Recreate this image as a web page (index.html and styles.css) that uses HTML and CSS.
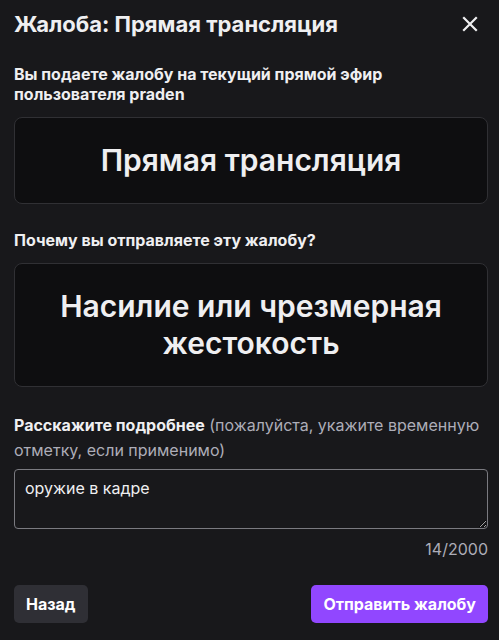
FILE: index.html
```html
<!DOCTYPE html>
<html lang="ru">
<head>
  <meta charset="UTF-8">
  <meta name="viewport" content="width=device-width, initial-scale=1.0">
  <title>Жалоба</title>
  <link rel="stylesheet" href="styles.css">
</head>
<body>
  <div class="modal">
    <div class="header">
      <h1 class="title">Жалоба: Прямая трансляция</h1>
      <button class="close" aria-label="Закрыть">
        <svg width="16" height="16" viewBox="0 0 16 16">
          <path d="M2 2 L14 14 M14 2 L2 14" stroke="#efeff1" stroke-width="2.2" stroke-linecap="square" fill="none"/>
        </svg>
      </button>
    </div>

    <p class="label">Вы подаете жалобу на текущий прямой эфир пользователя praden</p>
    <div class="choice">Прямая трансляция</div>

    <p class="label">Почему вы отправляете эту жалобу?</p>
    <div class="choice">Насилие или чрезмерная жестокость</div>

    <p class="details"><span class="details-strong">Расскажите подробнее</span> (пожалуйста, укажите временную отметку, если применимо)</p>
    <textarea class="input">оружие в кадре</textarea>
    <div class="counter">14/2000</div>

    <div class="actions">
      <button class="btn btn-back">Назад</button>
      <button class="btn btn-submit">Отправить жалобу</button>
    </div>
  </div>
</body>
</html>
```

FILE: styles.css
```css
* {
  box-sizing: border-box;
}
html, body {
  margin: 0;
  background-color: #18181b;
}
body {
  font-family: Inter, "Noto Sans", sans-serif;
  color: #efeff1;
}
.modal {
  padding: 10px 11px 18px 14px;
}
.header {
  display: flex;
  justify-content: space-between;
  align-items: center;
  height: 28px;
}
.title {
  margin: 0;
  font-size: 22px;
  font-weight: 700;
  line-height: 28px;
}
.close {
  background: none;
  border: 0;
  padding: 0;
  margin-right: 10px;
  width: 16px;
  height: 16px;
  display: flex;
}
.label {
  margin: 26px 0 13px;
  font-size: 16px;
  font-weight: 700;
  line-height: 20px;
}
.choice {
  background-color: #0e0e10;
  border: 1px solid #303034;
  border-radius: 8px;
  padding: 24px 40px;
  text-align: center;
  font-size: 30px;
  font-weight: 600;
  line-height: 37px;
}
.details {
  margin: 26px 0 6px;
  font-size: 16px;
  line-height: 25px;
  color: #adadb8;
}
.details-strong {
  color: #efeff1;
  font-weight: 700;
}
.input {
  display: block;
  width: 100%;
  height: 60px;
  background-color: #18181b;
  border: 1px solid #7a7a80;
  border-radius: 4px;
  padding: 8px 10px;
  font-family: inherit;
  font-size: 16px;
  line-height: 20px;
  color: #efeff1;
  resize: vertical;
}
.counter {
  margin-top: 10px;
  text-align: right;
  font-size: 16px;
  line-height: 20px;
  color: #adadb8;
}
.actions {
  display: flex;
  justify-content: space-between;
  margin-top: 26px;
}
.btn {
  height: 38px;
  border: 0;
  border-radius: 5px;
  padding: 0 12px;
  font-family: inherit;
  font-size: 16px;
  font-weight: 700;
  color: #fff;
}
.btn-back {
  background-color: #2f2f35;
}
.btn-submit {
  background-color: #9147ff;
}
```
